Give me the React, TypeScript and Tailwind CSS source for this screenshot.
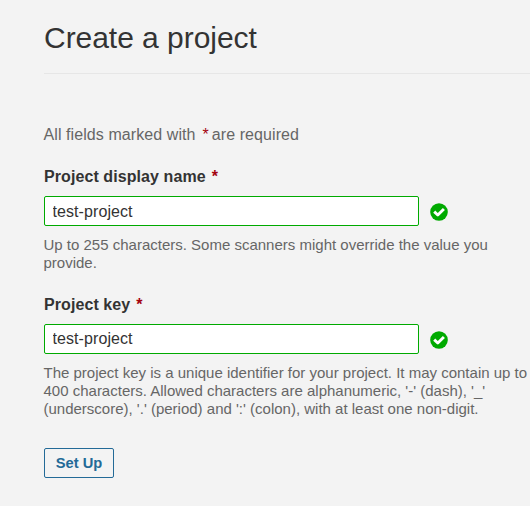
import React from "react";

function Check() {
  return (
    <svg className="mt-px ml-[11px] h-[18px] w-[18px] shrink-0" viewBox="0 0 18 18">
      <circle cx="9" cy="9" r="8.8" fill="#00aa00" />
      <path d="M4.2 8.6L7.8 12L13.9 6" fill="none" stroke="#fff" strokeWidth="2.9" strokeLinejoin="round" />
    </svg>
  );
}

function Label({ text }: { text: string }) {
  return (
    <label className="block h-[20px] text-[16px] leading-[20px] font-bold tracking-[0.08px] text-[#333]">
      {text}
      <span className="ml-[6px] text-[#a4030f]">*</span>
    </label>
  );
}

function Field({ inset = "" }: { inset?: string }) {
  return (
    <div className="flex items-center">
      <input
        defaultValue="test-project"
        className={`h-[30px] w-[375px] rounded-[2px] border border-[#00aa00] bg-white px-[7.5px] text-[16px] tracking-[0.08px] text-[#333] outline-none ${inset}`}
      />
      <Check />
    </div>
  );
}

export default function App() {
  return (
    <main className="h-[506px] w-[530px] overflow-hidden bg-[#f3f3f3] pl-[44px] font-['Liberation_Sans',Arial,sans-serif] text-[#666]">
      <h1 className="h-[74px] border-b border-[#e6e6e6] pt-[20px] text-[30px] leading-[36px] tracking-[-0.04px] text-[#333]">Create a project</h1>
      <p className="mt-[51px] h-[20px] text-[16px] leading-[20px] -ml-[0.5px]">
        <span className="tracking-[0.08px]">All fields marked with</span>
        <span className="ml-[7px] text-[#a4030f]">*</span>
        <span className="ml-[3px] tracking-[0.08px]">are required</span>
      </p>
      <div className="mt-[22px]">
        <Label text="Project display name" />
        <div className="mt-[9px]"><Field inset="pt-[2px]" /></div>
        <p className="mt-[10px] -ml-[0.5px] text-[15px] leading-[18px] whitespace-nowrap">
          Up to 255 characters. Some scanners might override the value you<br />provide.
        </p>
      </div>
      <div className="mt-[23px]">
        <Label text="Project key" />
        <div className="mt-[9px]"><Field /></div>
        <p className="mt-[10px] -ml-[0.5px] text-[15px] leading-[18px] whitespace-nowrap">
          The project key is a unique identifier for your project. It may contain up to<br />
          400 characters. Allowed characters are alphanumeric, '-' (dash), '_'<br />
          (underscore), '.' (period) and ':' (colon), with at least one non-digit.
        </p>
      </div>
      <button className="mt-[30px] h-[30px] w-[70px] rounded-[2px] border border-[#236a97] text-[14.7px] font-bold text-[#236a97]">Set Up</button>
    </main>
  );
}
